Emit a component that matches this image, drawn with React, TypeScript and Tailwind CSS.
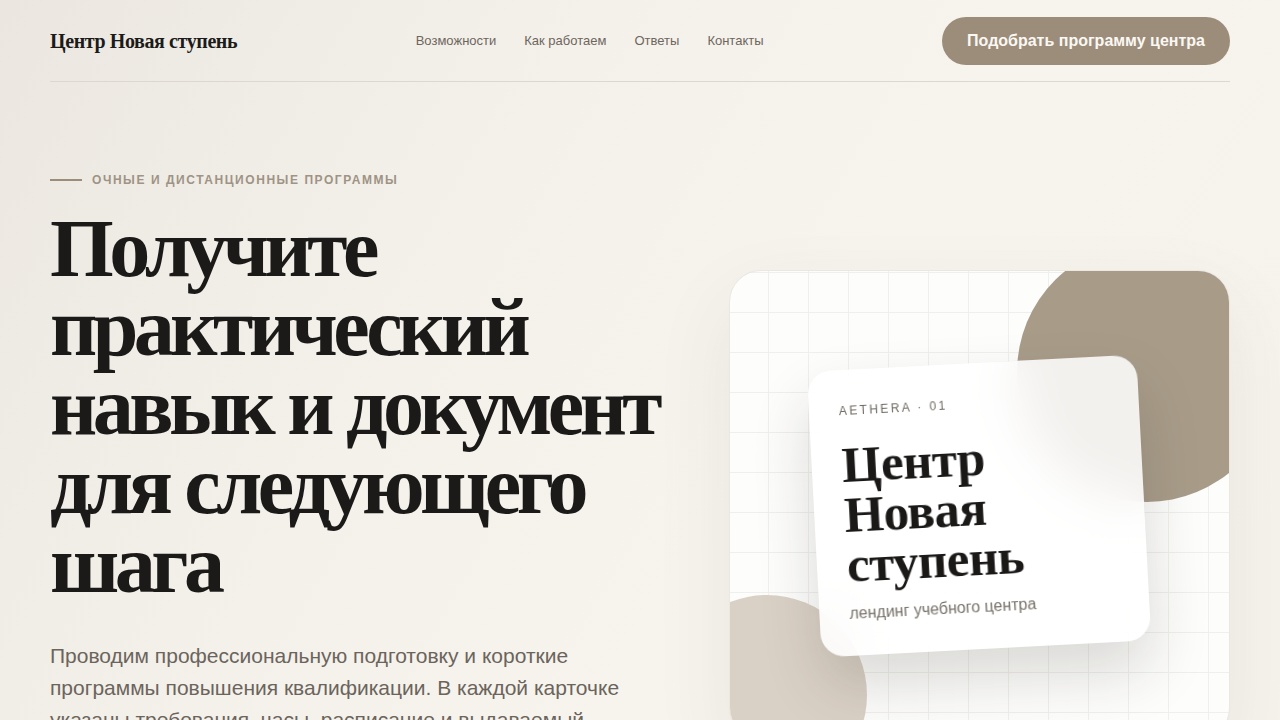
import React from 'react'

const navLinks = ['Возможности', 'Как работаем', 'Ответы', 'Контакты']

// ─── Header ────────────────────────────────────────────────────────
function Header() {
  return (
    <header className="flex items-center justify-between pt-[17px] pb-[16px] border-b border-[#dcd7cf]">
      <a className="font-['Liberation_Serif',serif] font-bold text-[20px] tracking-[-0.02em] text-[#1c1b1a]">
        Центр Новая ступень
      </a>
      <nav className="flex items-center gap-7">
        {navLinks.map((link) => (
          <a key={link} className="text-[13px] text-[#6e665d]">
            {link}
          </a>
        ))}
      </nav>
      <button className="h-12 px-[25px] rounded-full bg-[#9c8d7a] text-[16px] font-bold text-[#fbf8f3]">
        Подобрать программу центра
      </button>
    </header>
  )
}

// ─── Hero visual ───────────────────────────────────────────────────
function HeroVisual() {
  return (
    <div className="relative mt-[99px] h-[470px] rounded-[32px] overflow-hidden bg-[#fdfdfc] border border-[#ebe7e1] shadow-[0_30px_80px_rgba(70,55,40,0.08)] bg-[linear-gradient(to_right,#efefed_1px,transparent_1px),linear-gradient(to_bottom,#efefed_1px,transparent_1px)] bg-[size:40px_40px] bg-[position:-2px_1px]">
      {/* decorative circles */}
      <div className="absolute left-[287px] top-[-29px] w-[260px] h-[260px] rounded-full bg-[#a89c89]" />
      <div className="absolute left-[-63px] top-[324px] w-[200px] h-[200px] rounded-full bg-[#dad1c6]" />

      {/* floating card */}
      <div className="absolute left-[84px] top-[92px] w-[330px] h-[286px] -rotate-3 rounded-[24px] bg-white/85 backdrop-blur-xl shadow-[0_30px_60px_rgba(40,30,20,0.16)] px-[30px] pt-[32px]">
        <p className="text-[12px] tracking-[0.2em] text-[#6f6961] font-['Liberation_Sans',sans-serif]">
          AETHERA · 01
        </p>
        <h2 className="mt-[20px] font-['Liberation_Serif',serif] font-bold text-[51px] leading-[50px] tracking-[-0.01em] text-[#1a1918]">
          Центр
          <br />
          Новая
          <br />
          ступень
        </h2>
        <p className="mt-[12px] text-[16px] text-[#77716a] font-['Liberation_Sans',sans-serif]">
          лендинг учебного центра
        </p>
      </div>
    </div>
  )
}

export default function App() {
  return (
    <div className="min-h-screen w-full overflow-hidden bg-[linear-gradient(120deg,#ebe7e0_0%,#f4f1eb_35%,#f7f4ee_60%,#f6f3ed_100%)] font-['Liberation_Sans',sans-serif]">
      <div className="mx-auto w-[1180px]">
        <Header />

        <section className="grid grid-cols-[1fr_501px] gap-[29px] pt-[89px]">
          <div>
            <div className="flex items-center gap-[10px]">
              <span className="w-8 h-[1.5px] bg-[#9c8d7a]" />
              <span className="text-[12px] font-bold tracking-[0.13em] text-[#9e9385]">
                ОЧНЫЕ И ДИСТАНЦИОННЫЕ ПРОГРАММЫ
              </span>
            </div>

            <h1 className="mt-[20px] font-['Liberation_Serif',serif] font-bold text-[82px] leading-[79px] tracking-[-0.055em] text-[#1b1a19]">
              Получите
              <br />
              практический
              <br />
              навык и документ
              <br />
              для следующего
              <br />
              шага
            </h1>

            <p className="mt-[36px] max-w-[610px] text-[21px] leading-[32px] text-[#6b645c]">
              Проводим профессиональную подготовку и короткие программы повышения квалификации. В каждой карточке указаны требования, часы, расписание и выдаваемый документ.
            </p>
          </div>

          <HeroVisual />
        </section>
      </div>
    </div>
  )
}
